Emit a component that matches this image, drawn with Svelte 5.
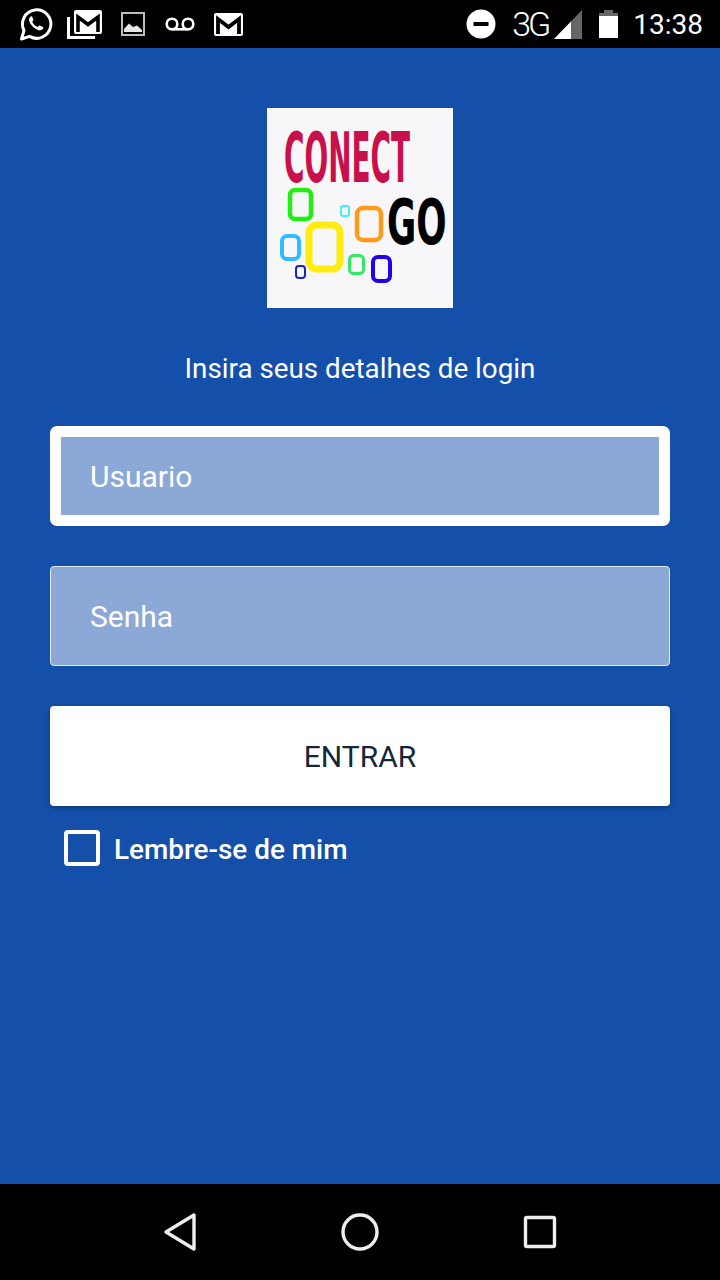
<script>
  let usuario = '';
  let senha = '';
  let lembrar = false;
</script>

<div class="screen">
  <header class="status-bar">
    <div class="status-left">
      <svg class="ic-whatsapp" width="34" height="34" viewBox="0 0 34 34">
        <path d="M2.5 32 L5 23.5 A14.2 14.2 0 1 1 10.6 29.4 Z" fill="none" stroke="#fff" stroke-width="3" stroke-linejoin="round"/>
        <path d="M12 9.5 c-1.6 1 -2.4 2.6 -1.8 4.6 c1.2 4 5.4 8 9.4 9.2 c2 .5 3.7 -.4 4.6 -2 c.3 -.6 .2 -1 -.3 -1.3 l-3 -1.5 c-.5 -.2 -.8 -.1 -1.1 .3 l-1 1.2 c-2.6 -1 -4.5 -2.8 -5.6 -5.3 l1 -1.1 c.3 -.4 .4 -.7 .2 -1.1 l-1.2 -2.8 c-.2 -.5 -.6 -.6 -1 -.4 Z" fill="#fff"/>
      </svg>
      <svg class="ic-mails" width="35" height="29" viewBox="0 0 35 29">
        <path d="M1.5 7 V27.5 H28" fill="none" stroke="#fff" stroke-width="3"/>
        <rect x="7" y="0" width="28" height="24" rx="2" fill="#fff"/>
        <path d="M11 22 V7 L21 14.5 L31 7 V22" fill="none" stroke="#000" stroke-width="3.6"/>
      </svg>
      <svg class="ic-image" width="24" height="24" viewBox="0 0 24 24">
        <rect x="1" y="1" width="22" height="22" fill="none" stroke="#bdbdbd" stroke-width="2"/>
        <path d="M3 20 V17 L8 11.5 L12 15 L16 13.5 L21 18 V20 Z" fill="#e6e6e6"/>
      </svg>
      <svg class="ic-voicemail" width="30" height="14" viewBox="0 0 30 14">
        <circle cx="7" cy="7" r="5.3" fill="none" stroke="#fff" stroke-width="2.6"/>
        <circle cx="23" cy="7" r="5.3" fill="none" stroke="#fff" stroke-width="2.6"/>
        <path d="M7 12.3 H23" stroke="#fff" stroke-width="2.6"/>
      </svg>
      <svg class="ic-gmail" width="29" height="23" viewBox="0 0 29 23">
        <rect width="29" height="23" rx="2" fill="#fff"/>
        <path d="M4 21 V6 L14.5 14 L25 6 V21" fill="none" stroke="#000" stroke-width="3.8"/>
      </svg>
    </div>
    <div class="status-right">
      <svg class="ic-dnd" width="30" height="30" viewBox="0 0 30 30">
        <circle cx="15" cy="15" r="14.5" fill="#fff"/>
        <rect x="7.5" y="13" width="15" height="4" fill="#000"/>
      </svg>
      <span class="network">3G</span>
      <svg class="ic-signal" width="28" height="29" viewBox="0 0 28 29">
        <path d="M0 29 L28 0 V29 Z" fill="#666"/>
        <path d="M0 29 L17 11.4 V29 Z" fill="#fff"/>
      </svg>
      <svg class="ic-battery" width="19" height="28" viewBox="0 0 19 28">
        <path d="M5 3 V0 H14 V3 Z" fill="#666"/>
        <path d="M0 3 H19 V6 H0 Z" fill="#666"/>
        <path d="M0 6 H19 V28 H0 Z" fill="#fff"/>
      </svg>
      <span class="clock">13:38</span>
    </div>
  </header>

  <main class="content">
    <svg class="logo" width="186" height="200" viewBox="0 0 186 200">
      <rect width="186" height="200" fill="#f7f7f9"/>
      <text class="logo-word" transform="translate(17 74) scale(0.93 2.33)" font-size="30" fill="#c8104a">CONECT</text>
      <text class="logo-word" transform="translate(120 136) scale(1.05 1.85)" font-size="34" fill="#000">GO</text>
      <rect x="23" y="82" width="21" height="29" rx="5" fill="none" stroke="#22ee11" stroke-width="4.5"/>
      <rect x="74" y="98" width="8" height="10" rx="2" fill="none" stroke="#44eeee" stroke-width="2"/>
      <rect x="90" y="100" width="24" height="32" rx="6" fill="none" stroke="#ff9a1a" stroke-width="4.5"/>
      <rect x="42" y="117" width="31" height="44" rx="8" fill="none" stroke="#ffec11" stroke-width="7"/>
      <rect x="15" y="128" width="17" height="23" rx="5" fill="none" stroke="#33bbff" stroke-width="4"/>
      <rect x="29" y="158" width="9" height="12" rx="3" fill="none" stroke="#1a22cc" stroke-width="2"/>
      <rect x="82.5" y="147.500" width="14" height="18" rx="4" fill="none" stroke="#33e866" stroke-width="3"/>
      <rect x="106" y="149" width="17" height="24" rx="5" fill="none" stroke="#2200ee" stroke-width="4"/>
    </svg>

    <p class="intro">Insira seus detalhes de login</p>

    <input class="field focused" type="text" placeholder="Usuario" bind:value={usuario} />
    <input class="field" type="password" placeholder="Senha" bind:value={senha} />
    <button class="submit" type="button">ENTRAR</button>

    <label class="remember">
      <input type="checkbox" bind:checked={lembrar} />
      <span>Lembre-se de mim</span>
    </label>
  </main>

  <nav class="nav-bar">
    <svg width="34" height="40" viewBox="0 0 34 40">
      <path d="M31 3 V37 L3 20 Z" fill="none" stroke="#eee" stroke-width="3.4" stroke-linejoin="round"/>
    </svg>
    <svg width="38" height="38" viewBox="0 0 38 38">
      <circle cx="19" cy="19" r="17" fill="none" stroke="#eee" stroke-width="3.4"/>
    </svg>
    <svg width="34" height="34" viewBox="0 0 34 34">
      <rect x="2.500" y="2.500" width="29" height="29" rx="1.500" fill="none" stroke="#eee" stroke-width="3.4"/>
    </svg>
  </nav>
</div>

<style>
  :global(body) {
    margin: 0;
    background-color: #1450aa;
  }

  .screen {
    width: 720px;
    height: 1280px;
    display: flex;
    flex-direction: column;
    font-family: Roboto, "Liberation Sans", sans-serif;
    background-color: #1450aa;
    overflow: hidden;
  }

  /* Status bar */
  .status-bar {
    height: 48px;
    flex: none;
    display: flex;
    justify-content: space-between;
    align-items: center;
    padding: 0 17px 0 19px;
    background-color: #000;
    color: #fff;
  }

  .status-left,
  .status-right {
    display: flex;
    align-items: center;
  }

  .status-left svg,
  .status-right svg {
    display: block;
    flex: none;
  }

  .ic-mails { margin-left: 14px; }
  .ic-image { margin-left: 19px; }
  .ic-voicemail { margin-left: 20px; }
  .ic-gmail { margin-left: 19px; }

  .network {
    margin-left: 16px;
    font-size: 34px;
    font-weight: 300;
    letter-spacing: -3px;
    line-height: 48px;
  }

  .ic-signal { margin-left: 6px; }
  .ic-battery { margin-left: 17px; }

  .clock {
    margin-left: 15px;
    padding-top: 2px;
    font-size: 28px;
    line-height: 48px;
  }

  /* Login form */
  .content {
    flex: 1;
    display: flex;
    flex-direction: column;
    align-items: center;
    padding: 60px 50px 0;
    box-sizing: border-box;
  }

  .logo {
    display: block;
    flex: none;
  }

  .logo-word {
    font-family: "DejaVu Sans", sans-serif;
    font-weight: 700;
  }

  .intro {
    margin: 43px 0 -1px;
    font-size: 27.8px;
    line-height: 36px;
    color: #fff;
  }

  .field {
    width: 100%;
    height: 100px;
    flex: none;
    margin-top: 40px;
    padding: 0 39px;
    box-sizing: border-box;
    border: 1px solid #e4ebf5;
    border-radius: 4px;
    background-color: #8ca8d6;
    color: #fff;
    font-family: inherit;
    font-size: 30px;
    outline: none;
  }

  .field::placeholder {
    color: #fff;
    opacity: 1;
  }

  .field.focused {
    padding: 0 29px;
    border: 11px solid #fff;
    border-radius: 7px;
  }

  .submit {
    width: 100%;
    height: 100px;
    flex: none;
    margin-top: 40px;
    border: none;
    border-radius: 4px;
    background-color: #fff;
    color: #12273a;
    font-family: inherit;
    font-size: 30px;
    box-shadow: 0 2px 5px rgba(0, 0, 0, 0.3);
  }

  .remember {
    align-self: flex-start;
    display: flex;
    align-items: center;
    gap: 14px;
    margin: 24px 0 0 14px;
    color: #fff;
    font-size: 27.9px;
    font-weight: 500;
  }

  .remember span {
    margin-top: 2px;
  }

  .remember input {
    appearance: none;
    width: 36px;
    height: 36px;
    margin: 0;
    box-sizing: border-box;
    border: 4px solid #fff;
    border-radius: 4px;
    background: transparent;
  }

  /* Navigation bar */
  .nav-bar {
    height: 96px;
    flex: none;
    display: grid;
    grid-template-columns: repeat(3, 180px);
    justify-content: center;
    justify-items: center;
    align-items: center;
    background-color: #000;
  }

  .nav-bar svg {
    display: block;
  }
</style>
